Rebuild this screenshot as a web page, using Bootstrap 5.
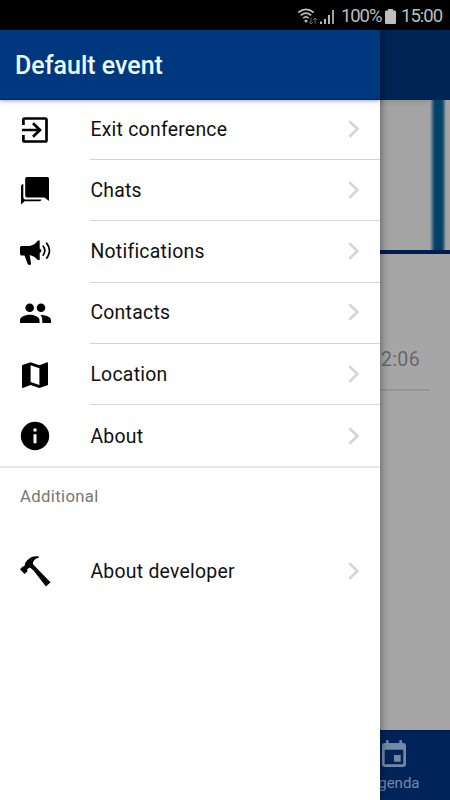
<!DOCTYPE html>
<html lang="en">
<head>
<meta charset="utf-8">
<meta name="viewport" content="width=device-width, initial-scale=1">
<title>Default event</title>
<link href="https://cdn.jsdelivr.net/npm/bootstrap@5.3.0/dist/css/bootstrap.min.css" rel="stylesheet">
<style>
body{font-family:Roboto,sans-serif;height:800px;background:#a6a6a6;color:#101010}
.status{height:30px;background:#000;color:#bebebe;font-size:18.5px;line-height:1;padding:2px 8px 0 0}
.status .pct{margin-left:2px;width:40px;white-space:nowrap;letter-spacing:-1.1px}
.status .clock{margin-left:5px;width:41px;white-space:nowrap;letter-spacing:-1px}
.stage{height:770px}
.page-bar{height:70px;background:#002454}
.banner{height:154px;background:linear-gradient(#969696,#a4a4a4 7px,#a4a4a4);border-bottom:4px solid #001d50}
.stripe{width:20px;background:linear-gradient(90deg,#a4a4a4,#37617c 3px,#00426c 5px,#003f67 11px,#1d5270 13px,#a4a4a4 16px)}
.time-row{height:137px;margin:0 20px;padding:0 10px 16px 0;border-bottom:2px solid #959595;color:#686868;font-size:19.5px;letter-spacing:.35px;line-height:26px}
.tabs{height:70px;background:#00245a;color:#7688a7;font-size:15px;border-top:1px solid #001c45}
.tab-agenda{width:112px;padding-top:8px;line-height:18px}
.tab-agenda svg{margin-bottom:3px}
.drawer{width:380px;background:#fff;box-shadow:0 0 9px rgba(0,0,0,.5);z-index:2}
.drawer-head{height:70px;background:#003880;color:#e9fbff;padding:2px 0 0 15px;font-size:25px;font-weight:500;line-height:1;border-bottom:1px solid #002568;box-shadow:0 1px 4px rgba(0,25,90,.4)}
.item{height:61.3px;font-size:19.4px;letter-spacing:.26px;line-height:24px}
.item:first-child{height:60px}
.glyph{width:70px;margin-left:20px}
.item-text{border-bottom:1px solid #d5d5d5;padding-right:20px;padding-bottom:1px}
.item-text span{padding:2px 0 0 .4px}
.item.last-main{height:62.800px;border-bottom:2px solid #e6e6e6}
.last-main .glyph{padding-top:1px}
.last-main .item-text{border:0;padding-bottom:0;padding-top:1px}
.extra .item-text{border:0}
.extra .glyph{padding-bottom:2px}
.group-label{height:73px;padding:17px 20px 0;font-size:16.7px;line-height:24px;letter-spacing:.35px;color:#777}
</style>
<script src="https://cdn.jsdelivr.net/npm/bootstrap@5.3.0/dist/js/bootstrap.bundle.min.js"></script>
</head>
<body class="overflow-hidden">
<svg width="0" height="0" class="position-absolute"><symbol id="chevron" viewBox="0 0 12 18"><path d="M1.300 1.200 9.400 9 1.300 16.800" fill="none" stroke="#d6d6d6" stroke-width="2.700"/></symbol></svg>
<div class="status d-flex align-items-center justify-content-end">
  <svg width="42" height="20" viewBox="0 0 42 20"><g fill="none" stroke="#bebebe" stroke-width="1.700"><path d="M1.300 6.500Q9 .2 16.700 6.500M3.800 9.400Q9 5 14.200 9.400M6.200 12.200Q9 9.700 11.800 12.200"/></g><circle cx="9" cy="15" r="1.500" fill="#bebebe"/><path d="M14 12v6m-2-2 2 2 2-2M18 18v-6m-2 2 2-2 2 2" stroke="#686868" fill="none"/><path d="M23 15.500h2V18h-2zM27 13h2v5h-2zM31 9h2v9h-2z" fill="#bebebe"/><path d="M35 4h2v14h-2z" fill="#a0a0a0"/></svg>
  <span class="pct">100%</span>
  <svg class="ms-1" width="11" height="17" viewBox="0 0 11 17"><path d="M3 1h5v1.500h2Q11 2.500 11 4v11q0 1-1 1H1q-1 0-1-1V4q0-1.500 1-1.500h2z" fill="#bebebe"/></svg>
  <span class="clock">15:00</span>
</div>
<div class="stage position-relative">
  <div class="page h-100 d-flex flex-column">
    <div class="page-bar"></div>
    <div class="banner d-flex justify-content-end"><div class="stripe"></div></div>
    <div class="time-row d-flex align-items-end justify-content-end">2:06</div>
    <div class="tabs mt-auto d-flex justify-content-end">
      <div class="tab-agenda d-flex flex-column align-items-center">
        <svg width="32" height="32" viewBox="0 0 24 24"><path fill="currentColor" d="M17 12h-5v5h5zM16 1v2H8V1H6v2H5c-1.100 0-2 .9-2 2v14c0 1.100.9 2 2 2h14c1.100 0 2-.9 2-2V5c0-1.100-.9-2-2-2h-1V1zm3 18H5V8h14z"/></svg>
        <span>Agenda</span>
      </div>
    </div>
  </div>
  <aside class="drawer position-absolute top-0 start-0 h-100">
    <div class="drawer-head d-flex align-items-center">Default event</div>
    <nav>
      <div class="item d-flex"><div class="glyph d-flex align-items-center"><svg width="30" height="30" viewBox="0 0 30 30"><path fill="none" stroke="#000" stroke-width="2.700" d="M3.400 10V4.700q0-1.200 1.200-1.200h20.700q1.200 0 1.200 1.200v20.600q0 1.200-1.200 1.200H4.600q-1.200 0-1.200-1.200V20M2 15h17M13 8.200 20 15l-7 6.800"/></svg></div><div class="item-text flex-grow-1 d-flex align-items-center justify-content-between"><span>Exit conference</span><svg width="12" height="18"><use href="#chevron"/></svg></div></div>
      <div class="item d-flex"><div class="glyph d-flex align-items-center"><svg width="30" height="30" viewBox="0 0 30 30"><path d="M7 1h20.500Q29 1 29 2.500V25l-4.500-3.500H7Q5.200 21.500 5.200 19.500V2.800Q5.200 1 7 1zM3.300 8v12.700q0 2.800 2.700 2.800h15.500q-.3 1.700-2 1.700H4.700L1 28.500V10.200Q1 8.500 3.300 8z"/></svg></div><div class="item-text flex-grow-1 d-flex align-items-center justify-content-between"><span>Chats</span><svg width="12" height="18"><use href="#chevron"/></svg></div></div>
      <div class="item d-flex"><div class="glyph d-flex align-items-center"><svg width="31" height="30" viewBox="0 0 31 30"><path d="M1.500 9h8Q14.500 8 18 3.500h1.700v8q1.800.8 1.800 2.300t-1.800 2.300V23H18q-3.500-4-8.300-5L11 26.500v1.300H8L4.500 18.500H1.800Q0 18.500 0 16.500V10.500Q0 9 1.500 9z"/><path fill="none" stroke="#000" stroke-width="1.700" d="M22.700 8.500q4.300 5 0 10.200M26.300 5.600q6.400 8 0 16"/></svg></div><div class="item-text flex-grow-1 d-flex align-items-center justify-content-between"><span>Notifications</span><svg width="12" height="18"><use href="#chevron"/></svg></div></div>
      <div class="item d-flex"><div class="glyph d-flex align-items-center"><svg width="31" height="30" viewBox="0 0 31 30"><circle cx="9.700" cy="9.800" r="4.300"/><circle cx="21" cy="9.800" r="4.300"/><path d="M0 25v-3c0-3.500 6.500-5.200 9.800-5.200s9.700 1.700 9.700 5.200v3zM20.500 17c4-.1 10.500 1.700 10.500 5v3h-8.700v-3q0-3-1.800-5z"/></svg></div><div class="item-text flex-grow-1 d-flex align-items-center justify-content-between"><span>Contacts</span><svg width="12" height="18"><use href="#chevron"/></svg></div></div>
      <div class="item d-flex"><div class="glyph d-flex align-items-center"><svg width="30" height="30" viewBox="0 0 30 30"><path fill-rule="evenodd" d="m27.300 2.200-7.900 3-8.800-3L2.500 5Q2 5.200 2 5.800v21.500q0 .8.800.7l7.800-3 8.800 3 8.100-2.700q.5-.2.500-.8V2.900q0-.8-.7-.7zM19.400 25l-8.800-3V5.200l8.800 3z"/></svg></div><div class="item-text flex-grow-1 d-flex align-items-center justify-content-between"><span>Location</span><svg width="12" height="18"><use href="#chevron"/></svg></div></div>
      <div class="item last-main d-flex"><div class="glyph d-flex align-items-center"><svg width="30" height="30" viewBox="0 0 30 30"><circle cx="15" cy="15" r="14.200"/><path d="M13.500 7.500h3v3h-3zM13.500 13.200h3v9h-3z" fill="#fff"/></svg></div><div class="item-text flex-grow-1 d-flex align-items-center justify-content-between"><span>About</span><svg width="12" height="18"><use href="#chevron"/></svg></div></div>
    </nav>
    <div class="group-label">Additional</div>
    <div class="extra item d-flex"><div class="glyph d-flex align-items-center"><svg width="31" height="32" viewBox="0 0 31 32"><path d="M18.800 1.500Q12 0 7 5.500Q4.500 8 4.500 11L2.800 11.500 0 14.300 4.500 19 7.300 16.500V14L10 12.500 13.500 15.500 26 31.500 30.500 27.200 17 13.500 12.800 9Q13 4 18.800 2.800z"/></svg></div><div class="item-text flex-grow-1 d-flex align-items-center justify-content-between"><span>About developer</span><svg width="12" height="18"><use href="#chevron"/></svg></div></div>
  </aside>
</div>
</body>
</html>
